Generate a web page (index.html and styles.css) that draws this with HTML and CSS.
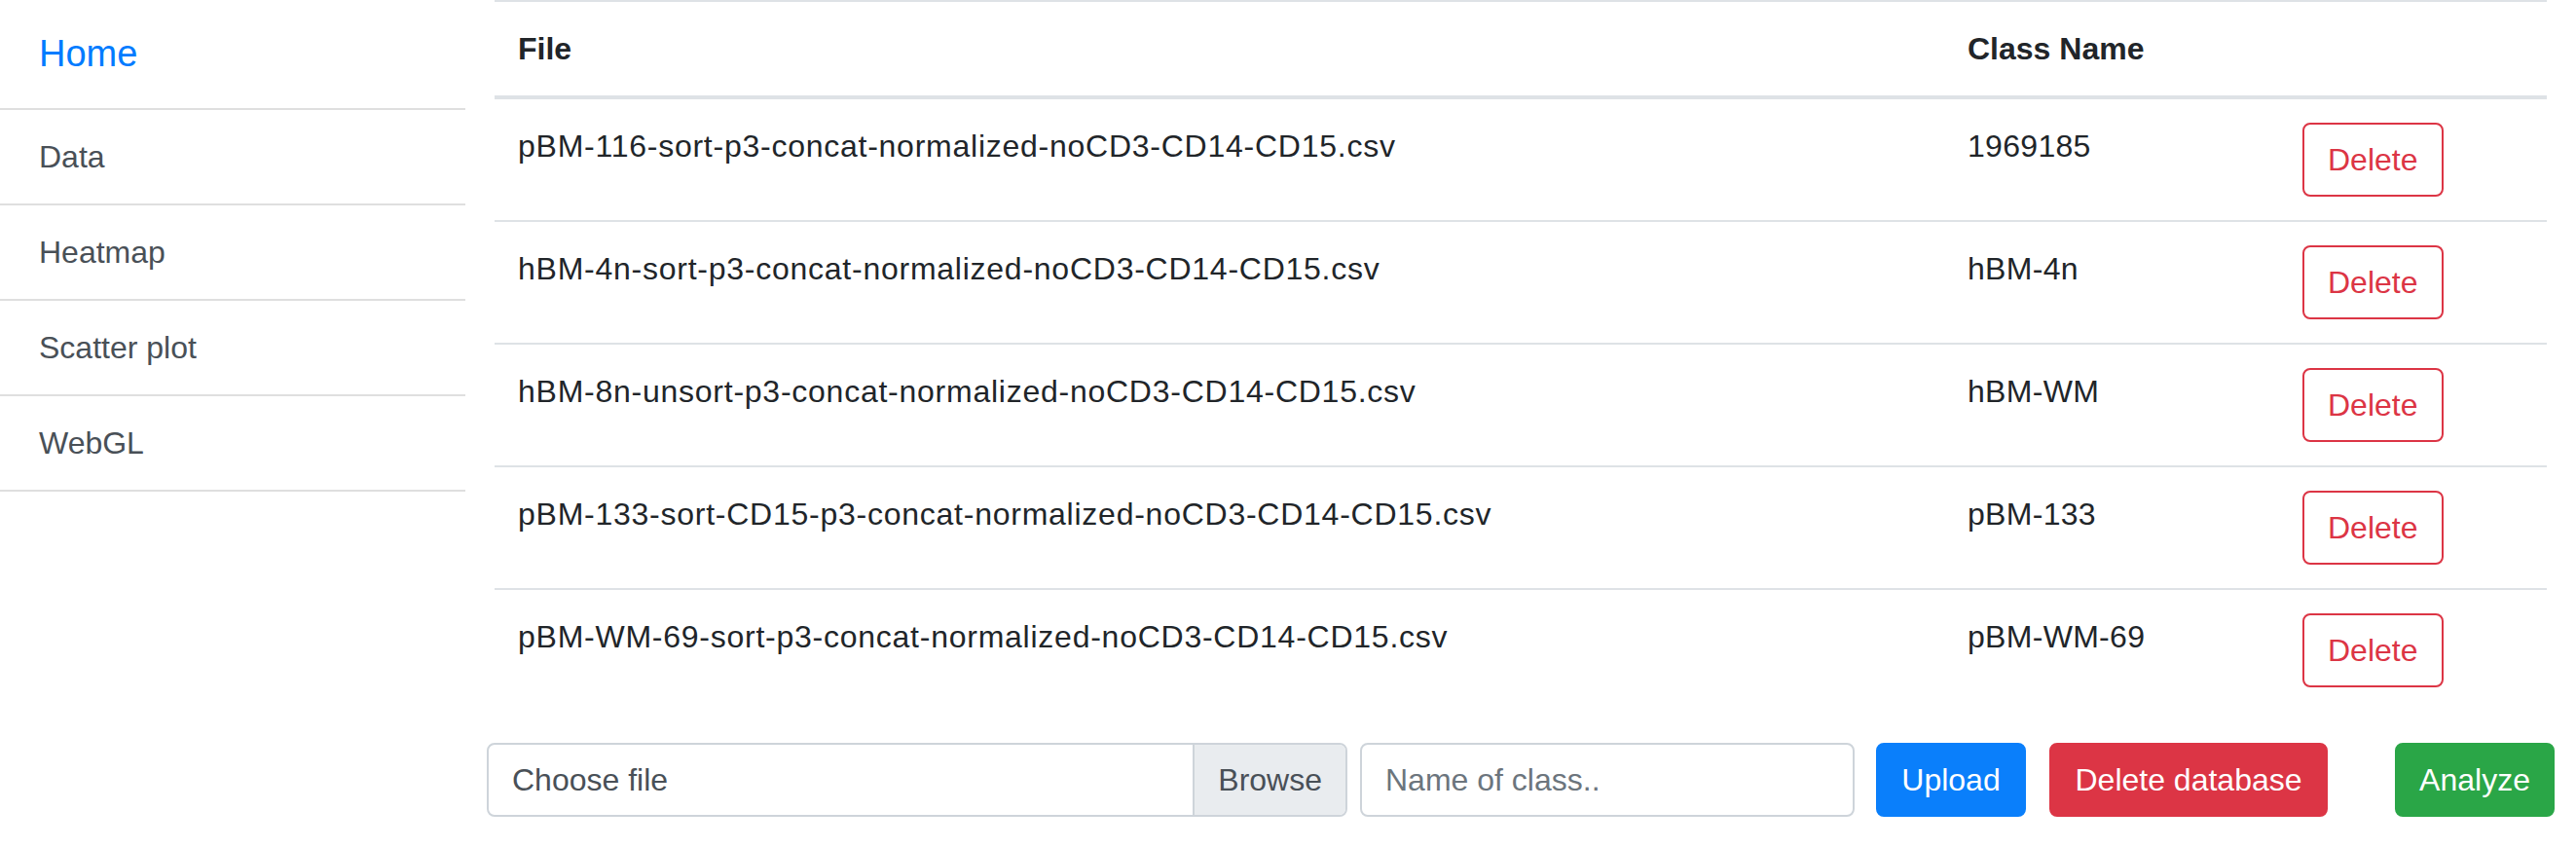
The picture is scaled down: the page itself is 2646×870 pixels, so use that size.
FILE: index.html
```html
<!DOCTYPE html>
<html lang="en">
<head>
<meta charset="utf-8">
<title>Files</title>
<link rel="stylesheet" href="styles.css">
</head>
<body>
<div class="layout">
  <nav class="sidebar">
    <a class="side-item side-home" href="#">Home</a>
    <a class="side-item" href="#">Data</a>
    <a class="side-item" href="#">Heatmap</a>
    <a class="side-item" href="#">Scatter plot</a>
    <a class="side-item" href="#">WebGL</a>
  </nav>
  <main class="content">
    <table class="files">
      <thead>
        <tr>
          <th class="col-file">File</th>
          <th class="col-class">Class Name</th>
          <th class="col-act"></th>
        </tr>
      </thead>
      <tbody>
        <tr>
          <td class="file-name">pBM-116-sort-p3-concat-normalized-noCD3-CD14-CD15.csv</td>
          <td class="class-name">1969185</td>
          <td><button class="btn btn-outline-danger" type="button">Delete</button></td>
        </tr>
        <tr>
          <td class="file-name">hBM-4n-sort-p3-concat-normalized-noCD3-CD14-CD15.csv</td>
          <td class="class-name">hBM-4n</td>
          <td><button class="btn btn-outline-danger" type="button">Delete</button></td>
        </tr>
        <tr>
          <td class="file-name">hBM-8n-unsort-p3-concat-normalized-noCD3-CD14-CD15.csv</td>
          <td class="class-name">hBM-WM</td>
          <td><button class="btn btn-outline-danger" type="button">Delete</button></td>
        </tr>
        <tr>
          <td class="file-name">pBM-133-sort-CD15-p3-concat-normalized-noCD3-CD14-CD15.csv</td>
          <td class="class-name">pBM-133</td>
          <td><button class="btn btn-outline-danger" type="button">Delete</button></td>
        </tr>
        <tr>
          <td class="file-name">pBM-WM-69-sort-p3-concat-normalized-noCD3-CD14-CD15.csv</td>
          <td class="class-name">pBM-WM-69</td>
          <td><button class="btn btn-outline-danger" type="button">Delete</button></td>
        </tr>
      </tbody>
    </table>
    <form class="upload-bar">
      <div class="file-picker">
        <span class="file-label">Choose file</span>
        <span class="file-browse">Browse</span>
      </div>
      <input class="class-input" type="text" placeholder="Name of class..">
      <button class="btn btn-primary btn-upload" type="button">Upload</button>
      <button class="btn btn-danger btn-wipe" type="button">Delete database</button>
      <button class="btn btn-success btn-analyze" type="button">Analyze</button>
    </form>
  </main>
</div>
</body>
</html>
```
FILE: styles.css
```css
* {
  box-sizing: border-box;
}

html, body {
  margin: 0;
  padding: 0;
  background: #fff;
}

body {
  font-family: "Liberation Sans", Arial, sans-serif;
  font-size: 32px;
  line-height: 48px;
  color: #212529;
}

.layout {
  display: flex;
  align-items: flex-start;
}

/* Sidebar */
.sidebar {
  width: 478px;
  flex: none;
  display: flex;
  flex-direction: column;
}

.side-item {
  display: block;
  padding: 24px 40px;
  line-height: 48px;
  color: #495057;
  text-decoration: none;
  border-bottom: 2px solid #dfdfdf;
}

.side-home {
  font-size: 38px;
  line-height: 63px;
  color: #007bff;
}

/* Main */
.content {
  flex: 1;
  min-width: 0;
  padding: 0 30px;
}

.files {
  width: 100%;
  border-collapse: separate;
  border-spacing: 0;
  margin-bottom: 33px;
}

.files th,
.files td {
  text-align: left;
  vertical-align: top;
  padding: 24px 24px;
  line-height: 48px;
}

.files th {
  font-weight: 700;
  border-top: 2px solid #dee2e6;
  border-bottom: 4px solid #dee2e6;
}

.files tbody tr + tr td {
  border-top: 2px solid #dee2e6;
}

.file-name {
  letter-spacing: 0.75px;
}

.class-name {
  letter-spacing: 0.3px;
}

.col-file {
  width: 1489px;
}

.col-class {
  width: 344px;
}

.col-act {
  width: 275px;
}

/* Buttons */
.btn {
  display: inline-block;
  height: 76px;
  padding: 12px 24px;
  font-family: inherit;
  font-size: 32px;
  line-height: 48px;
  border: 2px solid transparent;
  border-radius: 8px;
  background: transparent;
  text-align: center;
  cursor: pointer;
}

.btn-outline-danger {
  color: #dc3545;
  border-color: #dc3545;
  background: #fff;
}

.btn-primary {
  color: #fff;
  background: #0a7ffb;
  border-color: #0a7ffb;
}

.btn-danger {
  color: #fff;
  background: #dc3545;
  border-color: #dc3545;
}

.btn-success {
  color: #fff;
  background: #2aa647;
  border-color: #2aa647;
}

/* Upload bar */
.upload-bar {
  display: flex;
  align-items: stretch;
  margin: 0 -8px;
  height: 76px;
}

.file-picker {
  width: 884px;
  flex: none;
  display: flex;
  border: 2px solid #ced4da;
  border-radius: 8px;
  overflow: hidden;
}

.file-label {
  flex: 1;
  padding: 0 24px;
  line-height: 72px;
  color: #495057;
}

.file-browse {
  padding: 0 24px;
  line-height: 72px;
  color: #495057;
  background: #e9ecef;
  border-left: 2px solid #ced4da;
}

.class-input {
  width: 508px;
  flex: none;
  margin-left: 13px;
  padding: 0 24px;
  font-family: inherit;
  font-size: 32px;
  color: #495057;
  border: 2px solid #ced4da;
  border-radius: 8px;
  outline: none;
}

.class-input::placeholder {
  color: #6c757d;
  opacity: 1;
}

.btn-upload {
  width: 154px;
  margin-left: 22px;
  padding: 12px 0;
}

.btn-wipe {
  width: 286px;
  margin-left: 24px;
  padding: 12px 0;
}

.btn-analyze {
  width: 164px;
  margin-left: 69px;
  padding: 12px 0;
}
```
